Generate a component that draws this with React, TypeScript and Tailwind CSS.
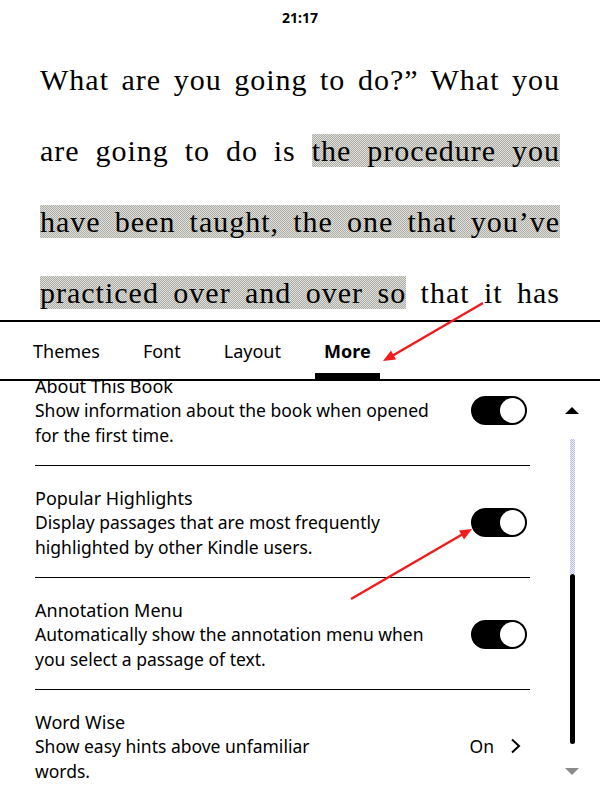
type Setting = {
  title: string;
  desc: string;
  kind: 'toggle' | 'link';
  value?: string;
};

const settings: Setting[] = [
  {
    title: 'About This Book',
    desc: 'Show information about the book when opened for the first time.',
    kind: 'toggle',
  },
  {
    title: 'Popular Highlights',
    desc: 'Display passages that are most frequently highlighted by other Kindle users.',
    kind: 'toggle',
  },
  {
    title: 'Annotation Menu',
    desc: 'Automatically show the annotation menu when you select a passage of text.',
    kind: 'toggle',
  },
  {
    title: 'Word Wise',
    desc: 'Show easy hints above unfamiliar words.',
    kind: 'link',
    value: 'On',
  },
];

const tabs = ['Themes', 'Font', 'Layout', 'More'];

// e-ink dithered grey used for highlighted passages
const hl =
  'bg-[image:repeating-conic-gradient(#acaca6_0%_25%,#e2e0da_0%_50%)] bg-[length:2px_2px]';

const Toggle = () => (
  <div className="flex h-[29px] w-[56px] justify-end rounded-full bg-black p-[2px]">
    <div className="h-[25px] w-[25px] rounded-full bg-white" />
  </div>
);

const Line = ({ children }: { children: React.ReactNode }) => (
  <div className="text-justify [text-align-last:justify]">{children}</div>
);

export default function App() {
  return (
    <div className="relative h-[800px] w-[600px] overflow-hidden bg-white text-black">
      {/* status bar */}
      <div className="flex h-[34px] items-center justify-center font-['Noto_Sans',sans-serif] text-[14px] font-bold">
        21:17
      </div>

      {/* book page */}
      <div className="h-[286px] overflow-hidden px-[40px] pt-[10px] font-['Liberation_Serif',serif] text-[30px] leading-[71px] tracking-[1px]">
        <Line>What are you going to do?” What you</Line>
        <Line>
          are going to do is <span className={hl}>the procedure you</span>
        </Line>
        <Line>
          <span className={hl}>have been taught, the one that you’ve</span>
        </Line>
        <Line>
          <span className={hl}>practiced over and over so</span> that it has
        </Line>
      </div>

      {/* reader settings sheet */}
      <div className="font-['Noto_Sans',sans-serif]">
        <div className="flex h-[61px] gap-[25px] border-y-2 border-black pl-[24px]">
          {tabs.map((t) => (
            <div key={t} className="flex flex-col">
              <span
                className={`px-[9px] pt-[17px] text-[18px] leading-[24px] ${t === 'More' ? 'font-bold' : ''}`}
              >
                {t}
              </span>
              <div className={`mt-auto h-[6px] ${t === 'More' ? 'bg-black' : ''}`} />
            </div>
          ))}
        </div>

        <div className="flex h-[419px]">
          <div className="w-[530px] overflow-hidden pl-[35px]">
            <div className="-mt-[27px]">
              {settings.map((s, i) => (
                <div key={s.title}>
                  <div className="pt-[19.5px] pb-[18px]">
                    <div className="text-[18px] leading-[24.5px]">{s.title}</div>
                    <div className="flex items-start">
                      <p
                        className={`text-[17.5px] leading-[24.5px] ${s.kind === 'toggle' ? 'w-[410px]' : 'w-[300px]'}`}
                      >
                        {s.desc}
                      </p>
                      {s.kind === 'toggle' ? (
                        <div className="ml-auto mr-[3px] -mt-[2px]">
                          <Toggle />
                        </div>
                      ) : (
                        <div className="ml-auto mr-[9px] flex h-[24.5px] items-center gap-[16px] text-[17.5px]">
                          <span>{s.value}</span>
                          <svg width="11" height="16" viewBox="0 0 11 16" fill="none">
                            <path d="M2 1.5 9 8l-7 6.5" stroke="black" strokeWidth="2" />
                          </svg>
                        </div>
                      )}
                    </div>
                  </div>
                  {i < settings.length - 1 && <div className="h-px bg-black" />}
                </div>
              ))}
            </div>
          </div>

          {/* scrollbar */}
          <div className="flex flex-1 flex-col items-center pl-[14px] pt-[26px]">
            <div className="h-0 w-0 border-x-[7px] border-b-[7px] border-x-transparent border-b-black" />
            <div className="mt-[25px] h-[135px] w-[5px] bg-[image:repeating-conic-gradient(#bcbcf2_0%_25%,#eeeeff_0%_50%)] bg-[length:2px_2px]" />
            <div className="h-[170px] w-[5px] rounded-full bg-black" />
            <div className="mt-[24px] h-0 w-0 border-x-[7px] border-t-[7px] border-x-transparent border-t-[#8a8a8a]" />
          </div>
        </div>
      </div>

      {/* red callout arrows */}
      <svg className="pointer-events-none absolute inset-0" width="600" height="800">
        <line x1="483" y1="303" x2="392" y2="356" stroke="#f21b1b" strokeWidth="2.5" />
        <polygon points="383,361 396,359.5 391,350.5" fill="#f21b1b" />
        <line x1="351" y1="599" x2="463" y2="534" stroke="#f21b1b" strokeWidth="2.5" />
        <polygon points="472,529 464,539.5 459,530.5" fill="#f21b1b" />
      </svg>
    </div>
  );
}
